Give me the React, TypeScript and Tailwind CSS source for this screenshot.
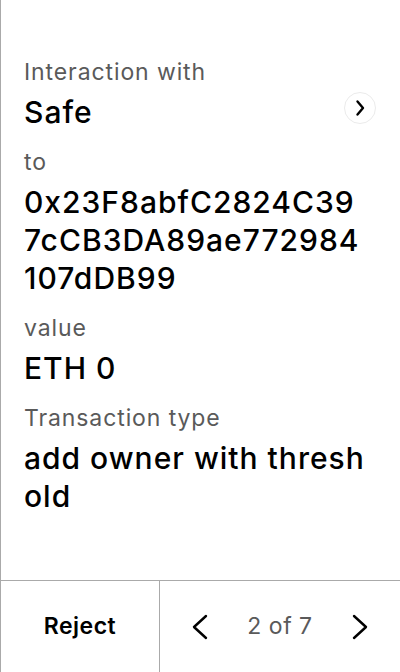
import React from "react";

const Label = ({ children }: { children: React.ReactNode }) => (
  <div className="text-[23px] leading-[28px] tracking-[0.9px] text-[#5a5a5a]">{children}</div>
);
const Value = ({ children }: { children: React.ReactNode }) => (
  <div className="text-[30px] leading-[38px] tracking-[1px] font-[450] text-black break-all">{children}</div>
);

export default function App() {
  return (
    <div
      className="w-[400px] h-[672px] bg-white flex flex-col border-l border-[#aaaaaa]"
      style={{ fontFamily: "Inter, 'Noto Sans', sans-serif" }}
    >
      <div className="flex-1 flex flex-col pl-[23px] pr-[30px] pt-[58px] gap-[17px]">
        <div className="flex flex-col gap-[7px]">
          <Label>Interaction with</Label>
          <div className="flex items-start justify-between mr-[-6px]">
            <Value>Safe</Value>
            <div className="mt-[-1px] w-[32px] h-[32px] rounded-full border border-[#ebebeb] flex items-center justify-center">
              <svg width="12" height="18" viewBox="0 0 12 18" fill="none">
                <path d="M3.5 2.5 L9 9 L3.5 15.5" stroke="black" strokeWidth="2.4" strokeLinecap="round" strokeLinejoin="round" />
              </svg>
            </div>
          </div>
        </div>
        <div className="flex flex-col gap-[7px]">
          <Label>to</Label>
          <Value>0x23F8abfC2824C397cCB3DA89ae772984107dDB99</Value>
        </div>
        <div className="flex flex-col gap-[7px]">
          <Label>value</Label>
          <Value>ETH 0</Value>
        </div>
        <div className="flex flex-col gap-[7px]">
          <Label>Transaction type</Label>
          <Value>add owner with threshold</Value>
        </div>
      </div>
      <div className="h-[92px] border-t border-[#aaaaaa] flex">
        <div className="w-[159px] border-r border-[#aaaaaa] flex items-center justify-center text-[23px] tracking-[0.5px] font-semibold text-black">
          Reject
        </div>
        <div className="flex-1 flex items-center justify-between pl-[31px] pr-[31px]">
          <svg width="18" height="26" viewBox="0 0 18 26" fill="none">
            <path d="M15 2 L3 13 L15 24" stroke="black" strokeWidth="2.4" strokeLinecap="round" strokeLinejoin="round" />
          </svg>
          <span className="text-[23px] tracking-[0.5px] text-[#5a5a5a]">2 of 7</span>
          <svg width="18" height="26" viewBox="0 0 18 26" fill="none">
            <path d="M3 2 L15 13 L3 24" stroke="black" strokeWidth="2.4" strokeLinecap="round" strokeLinejoin="round" />
          </svg>
        </div>
      </div>
    </div>
  );
}
